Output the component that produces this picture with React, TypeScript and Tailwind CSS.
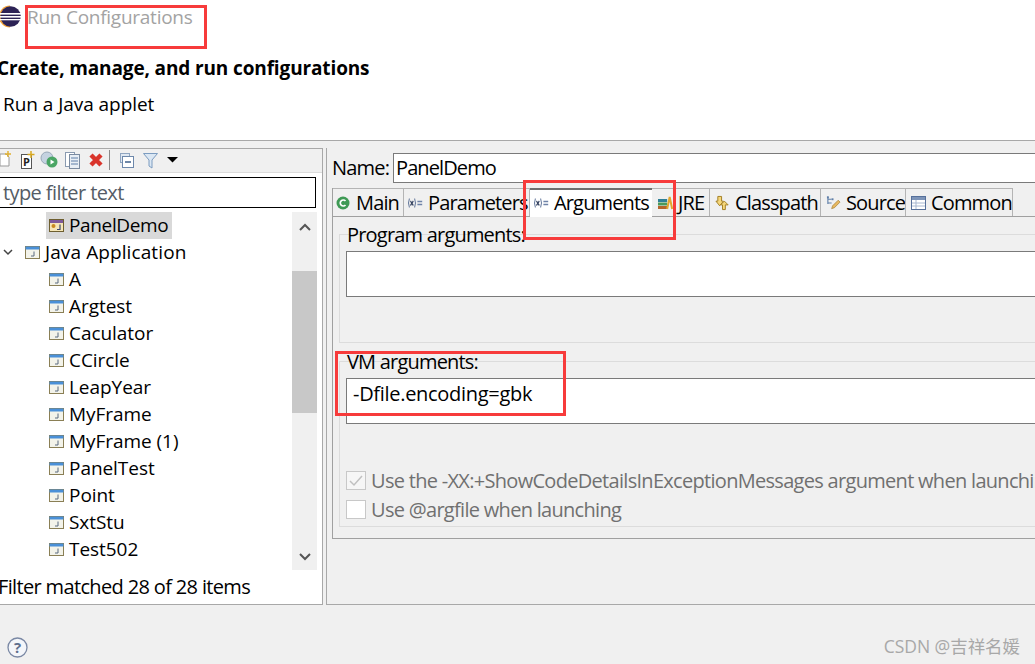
import React from "react";

const font = { fontFamily: '"Open Sans", "Noto Sans", sans-serif' };

function JavaIcon() {
  return (
    <svg width="15" height="13" viewBox="0 0 15 13" className="shrink-0">
      <rect x="0.5" y="0.5" width="14" height="12" fill="#f3f3ea" stroke="#8a7f55" />
      <rect x="0.5" y="0.5" width="14" height="3" fill="#4a90d8" />
      <path d="M9 5.5v4.5h-3" stroke="#5a6a80" strokeWidth="1" fill="none" />
    </svg>
  );
}

function AppletIcon() {
  return (
    <svg width="15" height="13" viewBox="0 0 15 13" className="shrink-0">
      <rect x="0.5" y="0.5" width="14" height="12" fill="#f6e7b8" stroke="#6e5f30" />
      <rect x="1" y="1" width="13" height="3" fill="#7d5a9a" />
      <circle cx="4.5" cy="7" r="2" fill="#c88a20" />
      <path d="M11 5.5v5h-3" stroke="#3a4a70" strokeWidth="1.2" fill="none" />
    </svg>
  );
}

function VarIcon() {
  return (
    <svg width="16" height="12" viewBox="0 0 20 12" preserveAspectRatio="none" className="shrink-0">
      <path d="M3 1.5Q0.8 6 3 10.5M9.5 1.5Q11.7 6 9.5 10.5" stroke="#5a6f95" strokeWidth="1.2" fill="none" />
      <path d="M4.3 4l3.6 4.5M7.9 4L4.3 8.5" stroke="#33415f" strokeWidth="1.3" />
      <path d="M13 4.5h6M13 7.5h6" stroke="#6f83a8" strokeWidth="1.4" />
    </svg>
  );
}

function Tab({ w, label, icon, active }: { w: string; label: string; icon: React.ReactNode; active?: boolean }) {
  return (
    <div
      className={
        active
          ? `${w} h-[29px] shrink-0 flex items-center gap-[5px] pb-[1px] bg-white border-t-[2px] border-[#6e6e6e] overflow-hidden z-10`
          : `${w} h-[28px] shrink-0 flex items-center gap-[5px] border-t border-r border-[#b4b4b4] overflow-hidden`
      }
    >
      {icon}
      <span className="whitespace-nowrap text-[20px] tracking-[-0.85px] text-black">{label}</span>
    </div>
  );
}

const rows = ["A", "Argtest", "Caculator", "CCircle", "LeapYear", "MyFrame", "MyFrame (1)", "PanelTest", "Point", "SxtStu", "Test502", "TestStu"];

function RedBox({ cls }: { cls: string }) {
  return <div className={`absolute border-[3px] border-[#f73b3b] pointer-events-none z-20 ${cls}`} />;
}

export default function App() {
  return (
    <div style={font} className="relative w-[1035px] h-[664px] overflow-hidden bg-[#f0f0f0] flex flex-col text-black">
      <div className="h-[140px] shrink-0 bg-white border-b border-[#a8a8a8] box-content">
        <div className="h-[34px] flex items-center">
          <svg width="22" height="23" viewBox="0 0 22 23" className="shrink-0 ml-[-1px] mt-[-2px]">
            <path d="M11 0.5a11 11 0 1 0 0 22z" fill="#f2a33a" />
            <circle cx="11.6" cy="11.5" r="10.2" fill="#2c2255" />
            <rect x="0" y="8" width="22" height="1.6" fill="#fff" />
            <rect x="0" y="11" width="22" height="1.6" fill="#fff" />
            <rect x="0" y="14" width="22" height="1.3" fill="#fff" />
          </svg>
          <span className="ml-[6px] text-[19px] tracking-[-0.26px] text-[#a3a3a3] whitespace-nowrap">Run Configurations</span>
        </div>
        <div className="mt-[21px] ml-[-3px] text-[19px] leading-[26px] font-bold tracking-[-0.13px] whitespace-nowrap">Create, manage, and run configurations</div>
        <div className="mt-[10px] ml-[3px] text-[19px] leading-[26px] tracking-[-0.05px] whitespace-nowrap">Run a Java applet</div>
      </div>

      <div className="flex pt-[7px] h-[464px] shrink-0">
        <div className="w-[323px] h-[457px] shrink-0 bg-white border-r border-t border-b border-[#a8a8a8] flex flex-col">
          <div className="h-[24px] shrink-0 bg-[#f0f0f0] border-b border-[#dcdcdc] flex items-center relative">
            <svg width="180" height="20" viewBox="0 0 180 20" className="mb-[2px]">
              <path d="M0 4h6l3 3v9H0z" fill="#fff" stroke="#999" />
              <path d="M8 1v6M5 4h6" stroke="#e0b030" strokeWidth="1.4" />
              <rect x="21.5" y="4.5" width="10" height="14" fill="#fff" stroke="#555" />
              <text x="23" y="16" fontSize="11" fontWeight="700" fill="#222">P</text>
              <path d="M31 1v7M27.5 4.5h7" stroke="#d8a820" strokeWidth="1.5" />
              <circle cx="47" cy="8" r="6" fill="#c4d2e0" stroke="#98a8b8" />
              <circle cx="52" cy="12" r="5.5" fill="#4aa564" />
              <path d="M50.5 9.5l4 2.5-4 2.5z" fill="#fff" />
              <rect x="65.5" y="2.5" width="9" height="14" fill="#fff" stroke="#8a9ab0" />
              <rect x="69.5" y="4.5" width="10" height="14" fill="#e8eef5" stroke="#7a8aa0" />
              <path d="M71 8h7M71 11h7M71 14h7" stroke="#5f7fa8" />
              <path d="M91 5l10 10M101 5l-10 10" stroke="#d9342b" strokeWidth="4.5" />
              <rect x="109" y="0" width="1" height="20" fill="#8a8a8a" />
              <rect x="120.5" y="3.5" width="9" height="9" fill="#dfe8f2" stroke="#8fa5c0" />
              <rect x="122.5" y="6.5" width="11" height="11" fill="#fff" stroke="#6d88ab" />
              <path d="M125 12h6" stroke="#3e5f8a" strokeWidth="1.5" />
              <path d="M143.5 3.5h14l-5.5 6.5v8l-3-2v-6z" fill="#dbe7f3" stroke="#7c9cc0" />
              <path d="M167 7h11l-5.5 5.5z" fill="#000" />
            </svg>
          </div>
          <div className="mt-[4px] ml-[-2px] h-[31px] w-[318px] shrink-0 bg-white border border-black flex items-center text-[20px] tracking-[-0.6px] text-[#555c66]">
            <span className="ml-[4px]">type filter text</span>
          </div>
          <div className="mt-[4px] h-[358px] w-[317px] shrink-0 flex overflow-hidden">
            <div className="w-[292px] shrink-0 text-[19px] tracking-[-0.05px]">
              <div className="h-[27px] flex items-center">
                <div className="ml-[46px] w-[126px] h-[27px] bg-[#d9d9d9] flex items-center gap-[5px] pl-[3px]">
                  <AppletIcon />
                  <span className="tracking-[-0.35px]">PanelDemo</span>
                </div>
              </div>
              <div className="h-[27px] flex items-center">
                <svg width="10" height="7" viewBox="0 0 10 7" className="ml-[3px]">
                  <path d="M1 1l4 4 4-4" stroke="#444" strokeWidth="1.5" fill="none" />
                </svg>
                <div className="ml-[12px] flex items-center gap-[5px]">
                  <JavaIcon />
                  <span className="tracking-[0.1px]">Java Application</span>
                </div>
              </div>
              {rows.map((r) => (
                <div key={r} className="h-[27px] shrink-0 flex items-center gap-[5px] pl-[49px]">
                  <JavaIcon />
                  <span>{r}</span>
                </div>
              ))}
            </div>
            <div className="w-[25px] shrink-0 bg-[#f0f0f0] flex flex-col items-center">
              <div className="h-[59px] shrink-0 w-full flex items-start justify-center pt-[11px]">
                <svg width="12" height="8" viewBox="0 0 12 8">
                  <path d="M1 7l5-5 5 5" stroke="#555" strokeWidth="2" fill="none" />
                </svg>
              </div>
              <div className="h-[142px] w-full shrink-0 bg-[#c8c8c8]" />
              <div className="flex-1 w-full flex items-end justify-center pb-[9px]">
                <svg width="12" height="8" viewBox="0 0 12 8">
                  <path d="M1 1l5 5 5-5" stroke="#555" strokeWidth="2" fill="none" />
                </svg>
              </div>
            </div>
          </div>
          <div className="flex-1 flex items-center ml-[-2px] text-[20px] tracking-[-0.65px] whitespace-nowrap">Filter matched 28 of 28 items</div>
        </div>

        <div className="ml-[3px] flex-1 min-w-0 h-[457px] border-l border-b border-[#a8a8a8] pl-[5px] flex flex-col">
          <div className="mt-[5px] h-[30px] shrink-0 flex items-center">
            <span className="w-[61px] text-[20px] tracking-[-0.8px]">Name:</span>
            <div className="flex-1 mr-[-10px] h-[30px] bg-white border border-[#7a7a7a] flex items-center pl-[2px] text-[20px] tracking-[-0.9px]">PanelDemo</div>
          </div>
          <div className="mt-[5px] h-[351px] shrink-0 border-l border-b border-[#a0a0a0] flex flex-col">
            <div className="h-[28px] shrink-0 flex items-start relative">
              <Tab w="w-[71px] pl-[3px]" label="Main" icon={
                <svg width="14" height="14" viewBox="0 0 14 14" className="shrink-0 mr-[1px]">
                  <circle cx="7" cy="7" r="6.5" fill="#3f9a55" />
                  <path d="M9.5 5A3 3 0 1 0 9.5 9" stroke="#fff" strokeWidth="1.7" fill="none" />
                </svg>
              } />
              <Tab w="w-[126px] pl-[3px]" label="Parameters" icon={<VarIcon />} />
              <Tab w="w-[122px] pl-[3px]" label="Arguments" active icon={<VarIcon />} />
              <Tab w="w-[58px] pl-[6px]" label="JRE" icon={
                <svg width="15" height="15" viewBox="0 0 18 15" preserveAspectRatio="none" className="shrink-0">
                  <rect x="0" y="4" width="11" height="3" fill="#2f7f96" />
                  <rect x="0" y="7.5" width="11" height="3" fill="#4a9a5a" />
                  <rect x="0" y="11" width="11" height="3" fill="#b5652a" />
                  <path d="M11 14L14 2l3 12" stroke="#e2a72e" strokeWidth="2.4" fill="none" />
                </svg>
              } />
              <Tab w="w-[111px] pl-[5px]" label="Classpath" icon={
                <svg width="15" height="16" viewBox="0 0 16 16" className="shrink-0">
                  <path d="M3 1h4v5h2L5 11 1 6h2z" fill="#f6d77a" stroke="#a07c20" />
                  <path d="M11 15h-3v-5H6l4-4 4 4h-3z" fill="#f6d77a" stroke="#a07c20" />
                </svg>
              } />
              <Tab w="w-[85px] pl-[5px]" label="Source" icon={
                <svg width="15" height="16" viewBox="0 0 16 16" className="shrink-0">
                  <path d="M2 1v8M2 4h4M2 8h4" stroke="#5f7fa8" strokeWidth="1.2" fill="none" />
                  <rect x="1" y="1" width="2" height="2" fill="#5f7fa8" />
                  <rect x="6" y="3" width="2" height="2" fill="#5f7fa8" />
                  <path d="M6 14l1-3 6-6 2 2-6 6z" fill="#e8b860" stroke="#a07c30" strokeWidth="0.7" />
                </svg>
              } />
              <Tab w="w-[107px] pl-[5px]" label="Common" icon={
                <svg width="15" height="14" viewBox="0 0 15 14" className="shrink-0">
                  <rect x="0.5" y="0.5" width="14" height="13" fill="#fff" stroke="#56709a" />
                  <rect x="1" y="1" width="13" height="3" fill="#7d94b8" />
                  <path d="M1 7h13M1 10h13M5 4v9" stroke="#a8b8d0" />
                </svg>
              } />
            </div>
            <div className="flex-1 border-t border-[#a0a0a0] pl-[6px] relative">
              <div className="h-[127px] relative">
                <div className="absolute left-0 right-0 top-[17px] h-[109px] border-l border-t border-b border-[#dcdcdc]" />
                <div className="relative pl-[8px] pt-[5px] text-[20px] leading-[25px] tracking-[-0.8px] whitespace-nowrap">Program arguments:</div>
                <div className="relative ml-[7px] mr-[-10px] mt-[4px] h-[46px] bg-white border border-[#7a7a7a]" />
              </div>
              <div className="mt-[5px] h-[178px] relative">
                <div className="absolute left-0 right-0 top-[12px] bottom-0 border-l border-t border-b border-[#dcdcdc]" />
                <div className="relative pl-[8px] text-[20px] leading-[25px] tracking-[-0.8px] whitespace-nowrap">VM arguments:</div>
                <div className="relative ml-[7px] mr-[-10px] mt-[4px] h-[46px] bg-white border border-[#7a7a7a] pl-[6px] text-[20px] leading-[29px] tracking-[-0.3px]">-Dfile.encoding=gbk</div>
                <div className="relative ml-[7px] mt-[47px] h-[19px] flex items-center gap-[5px] text-[20px] tracking-[-0.7px] text-[#707070] whitespace-nowrap">
                  <div className="w-[20px] h-[19px] shrink-0 bg-[#f6f6f6] border border-[#c8c8c8] flex items-center justify-center">
                    <svg width="14" height="12" viewBox="0 0 14 12"><path d="M1 6l4 4 8-9" stroke="#c0c0c0" strokeWidth="1.5" fill="none" /></svg>
                  </div>
                  <span>Use the -XX:+ShowCodeDetailsInExceptionMessages argument when launching</span>
                </div>
                <div className="relative ml-[7px] mt-[10px] h-[19px] flex items-center gap-[5px] text-[20px] tracking-[-0.7px] text-[#707070] whitespace-nowrap">
                  <div className="w-[20px] h-[19px] shrink-0 bg-white border border-[#c8c8c8]" />
                  <span>Use @argfile when launching</span>
                </div>
              </div>
            </div>
          </div>
        </div>
      </div>

      <div className="flex-1 flex items-center justify-between pt-[20px] pl-[7px] pr-[15px]">
        <svg width="21" height="21" viewBox="0 0 21 21" className="mt-[6px]">
          <circle cx="10.5" cy="10.5" r="9.5" fill="#f4f6fa" stroke="#7a88a4" strokeWidth="1.3" />
          <text x="10.5" y="16" textAnchor="middle" fontSize="15" fontWeight="700" fill="#5f6f8e">?</text>
        </svg>
        <span className="mt-[4px] text-[17.5px] tracking-[-0.05px] text-[#a8a8a8] whitespace-nowrap" style={{ fontFamily: '"Open Sans", "Noto Sans CJK SC", sans-serif' }}>CSDN @吉祥名媛</span>
      </div>

      <RedBox cls="left-[25px] top-[5px] w-[182px] h-[44px]" />
      <RedBox cls="left-[523px] top-[180px] w-[153px] h-[60px]" />
      <RedBox cls="left-[335px] top-[351px] w-[231px] h-[65px]" />
    </div>
  );
}
